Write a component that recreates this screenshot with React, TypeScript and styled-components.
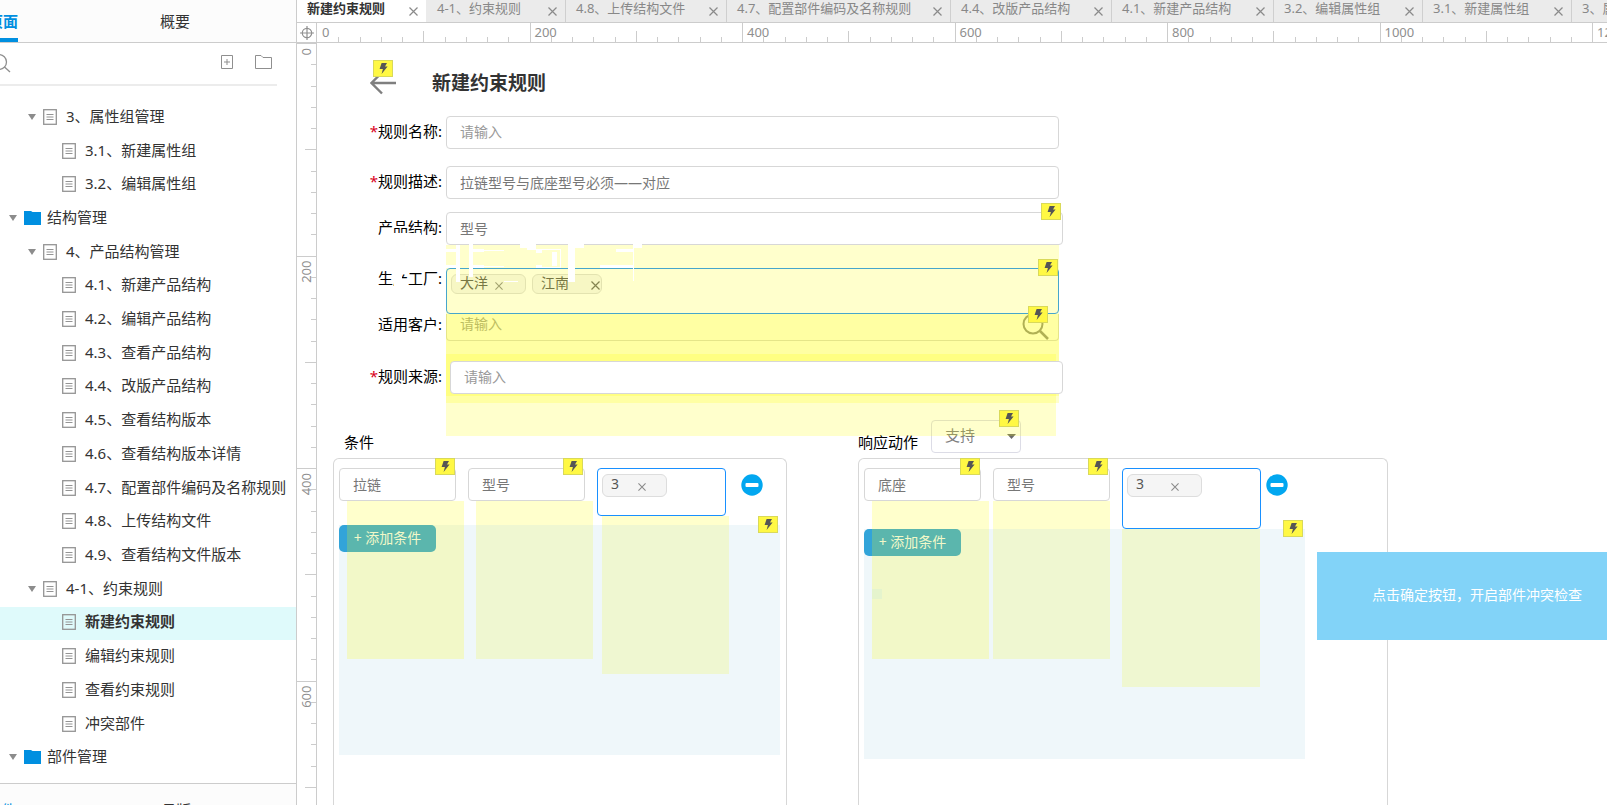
import React from "react";
import styled, { createGlobalStyle, css } from "styled-components";

const GlobalStyle = createGlobalStyle`
  *, *::before, *::after { box-sizing: border-box; }
  body {
    margin: 0;
    background: #ffffff;
    color: #333333;
    font-family: "Noto Sans", "Noto Sans CJK SC", sans-serif;
    font-size: 15px;
    line-height: 20px;
  }
  button, input, select { font: inherit; }
  button { border: 0; padding: 0; background: none; cursor: pointer; }
`;

/* ---------- shell ---------- */

const Shell = styled.div`
  display: flex;
  height: 100vh;
  overflow: hidden;
`;

const Sidebar = styled.aside`
  display: flex;
  flex-direction: column;
  flex: 0 0 297px;
  min-width: 0;
  border-right: 1px solid #cccccc;
  overflow: hidden;
`;

const PaneTabs = styled.div`
  display: flex;
  flex: none;
  gap: 142px;
  height: 43px;
  background: #fcfcfc;
  border-bottom: 1px solid #cccccc;
`;

const PaneTab = styled.button<{ $active?: boolean }>`
  display: flex;
  justify-content: flex-end;
  align-items: center;
  height: 42px;
  color: ${(p) => (p.$active ? "#008fe0" : "#333333")};
  font-weight: ${(p) => (p.$active ? 700 : 400)};
  white-space: nowrap;
  ${(p) =>
    p.$active &&
    css`
      width: 18px;
      border-bottom: 4px solid #008fe0;
      padding-top: 4px;
    `}
`;

const LibraryTabs = styled.div`
  display: flex;
  flex: none;
  align-items: flex-start;
  gap: 145px;
  height: 22px;
  padding-top: 16px;
  background: #fcfcfc;
  border-top: 1px solid #cccccc;
  overflow: hidden;
`;

const LibraryTab = styled.button<{ $active?: boolean }>`
  display: flex;
  justify-content: flex-end;
  ${(p) => p.$active && "width: 16px;"}
  color: ${(p) => (p.$active ? "#008fe0" : "#333333")};
  white-space: nowrap;
`;

const SearchBar = styled.div`
  display: flex;
  flex: none;
  align-items: center;
  height: 43px;
  margin-right: 19px;
  padding: 0 5px 2px 0;
  border-bottom: 2px solid #ececec;
`;

const SearchInput = styled.input`
  flex: 1;
  min-width: 0;
  border: 0;
  outline: 0;
  background: transparent;
`;

const BarButton = styled.button`
  display: flex;
  margin-left: 22px;
`;

const Tree = styled.ul`
  display: flex;
  flex: 1;
  flex-direction: column;
  min-height: 0;
  margin: 0;
  padding: 15px 0 8px;
  list-style: none;
`;

const TreeRow = styled.li<{ $level: number; $selected?: boolean }>`
  display: flex;
  flex: 1;
  align-items: center;
  padding: 0 0 2px ${(p) => 9 + p.$level * 19}px;
  background: ${(p) => (p.$selected ? "#dffafb" : "transparent")};
  font-weight: ${(p) => (p.$selected ? 700 : 400)};
  white-space: nowrap;
`;

const TreeToggle = styled.span`
  display: flex;
  width: 15px;
`;

const TreeIcon = styled.span`
  display: flex;
  width: 23px;
`;

const TreeName = styled.span`
  padding-bottom: 2px;
`;

const Workspace = styled.main`
  display: flex;
  flex: 1;
  flex-direction: column;
  min-width: 0;
`;

const DocTabs = styled.div`
  display: flex;
  flex: none;
  height: 23px;
  background: #ebebeb;
  border-bottom: 1px solid #cccccc;
  overflow: hidden;
`;

const DocTab = styled.div<{ $width: number; $active?: boolean }>`
  display: flex;
  flex: 0 0 ${(p) => p.$width}px;
  align-items: center;
  justify-content: space-between;
  height: 22px;
  padding: 0 8px 0 10px;
  border-right: 1px solid ${(p) => (p.$active ? "#ebebeb" : "#cfcfcf")};
  background: ${(p) => (p.$active ? "#ffffff" : "#ebebeb")};
  color: ${(p) => (p.$active ? "#333333" : "#888888")};
  font-size: 13px;
  font-weight: ${(p) => (p.$active ? 700 : 400)};
`;

const DocName = styled.span`
  height: 22px;
  line-height: 16px;
  white-space: nowrap;
`;

const DocClose = styled.button`
  display: flex;
`;

const RulerRow = styled.div`
  display: flex;
  flex: none;
  height: 20px;
  border-bottom: 1px solid #cccccc;
`;

const RulerCorner = styled.div`
  display: flex;
  flex: 0 0 20px;
  align-items: center;
  justify-content: center;
  border-right: 1px solid #cccccc;
`;

const RulerTrack = styled.div`
  flex: 1;
  min-width: 0;
  overflow: hidden;
`;

const Stage = styled.div`
  display: flex;
  flex: 1;
  min-height: 0;
`;

const SideRuler = styled.div`
  flex: 0 0 20px;
  border-right: 1px solid #cccccc;
  overflow: hidden;
`;

const Canvas = styled.section`
  position: relative;
  display: flex;
  flex: 1;
  flex-direction: column;
  min-width: 0;
  overflow: hidden;
`;

/* ---------- page on the canvas ---------- */

const TitleRow = styled.header`
  display: flex;
  flex: none;
  align-items: center;
  gap: 36px;
  height: 60px;
  padding: 20px 0 0 53px;
`;

const BackButton = styled.button`
  position: relative;
  display: flex;
`;

const Title = styled.h1`
  margin: 0;
  font-size: 19px;
  line-height: 24px;
  white-space: nowrap;
`;

const Form = styled.form`
  display: flex;
  flex: none;
  flex-direction: column;
  padding-top: 13px;
`;

const FormRow = styled.div<{ $gap?: number }>`
  position: relative;
  display: flex;
  align-items: flex-start;
  margin-top: ${(p) => p.$gap ?? 0}px;
`;

const Label = styled.label<{ $joined?: boolean }>`
  flex: 0 0 129px;
  padding: ${(p) => (p.$joined ? 0 : 5)}px 4px 0 0;
  color: #000000;
  text-align: right;
  white-space: nowrap;
`;

const Star = styled.span`
  color: #d9001b;
`;

const Field = styled.div<{ $width: number; $raised?: boolean; $shift?: boolean }>`
  position: relative;
  flex: 0 0 ${(p) => p.$width}px;
  ${(p) => p.$raised && "z-index: 2;"}
  ${(p) => p.$shift && "margin-left: 4px;"}
`;

const TextInput = styled.input<{ $joined?: boolean }>`
  display: block;
  width: 100%;
  height: ${(p) => (p.$joined ? 27 : 33)}px;
  padding: ${(p) => (p.$joined ? "0 13px 8px" : "0 13px 2px")};
  border: 1px solid #d7d7d7;
  border-radius: 4px;
  ${(p) => p.$joined && "border-top: 0; border-radius: 0 0 4px 4px;"}
  background: #ffffff;
  color: #777777;
  font-size: 14px;
  outline: 0;
  &::placeholder { color: #999999; opacity: 1; }
`;

const TagBox = styled.div<{ $height: number }>`
  display: flex;
  align-items: flex-start;
  gap: 6px;
  height: ${(p) => p.$height}px;
  padding: 5px 4px;
  border: 1px solid #1890ff;
  border-radius: 4px;
  background: #ffffff;
`;

const Tag = styled.span<{ $width: number; $compact?: boolean }>`
  display: flex;
  align-items: center;
  gap: 7px;
  width: ${(p) => p.$width}px;
  height: ${(p) => (p.$compact ? 20 : 23)}px;
  padding: 0 0 3px 8px;
  border: 1px solid #dddddd;
  border-radius: 6px;
  background: #f5f5f5;
  color: #555555;
  font-size: 14px;
  white-space: nowrap;
`;

const TagClose = styled.button<{ $inset?: number }>`
  display: flex;
  padding-top: 6px;
  margin-left: ${(p) => p.$inset ?? 0}px;
`;

const SearchButton = styled.button`
  position: absolute;
  right: 10px;
  bottom: 1px;
  display: flex;
`;

const BadgeBox = styled.span<{ $top: number; $right: number }>`
  position: absolute;
  top: ${(p) => p.$top}px;
  right: ${(p) => p.$right}px;
  z-index: 3;
  display: flex;
  align-items: center;
  justify-content: center;
  width: 20px;
  height: 17px;
  border: 1px solid #d9d95a;
  background: #fff844;
`;

const DropLayer = styled.div<{
  $left?: number;
  $offset?: number;
  $width: number;
  $height: number;
  $front?: boolean;
}>`
  position: absolute;
  top: calc(100% + ${(p) => p.$offset ?? 0}px);
  left: ${(p) => p.$left ?? 0}px;
  z-index: ${(p) => (p.$front ? 2 : 1)};
  width: ${(p) => p.$width}px;
  height: ${(p) => p.$height}px;
  background: rgba(255, 255, 0, 0.2);
  pointer-events: none;
`;

const Traces = styled.svg`
  position: absolute;
  top: 187px;
  left: 50px;
  z-index: 2;
  pointer-events: none;
`;

const Sections = styled.div`
  display: flex;
  flex: 1;
  gap: 71px;
  min-height: 0;
  padding: 26px 0 0 16px;
`;

const Section = styled.section<{ $width: number }>`
  display: flex;
  flex: 0 0 ${(p) => p.$width}px;
  flex-direction: column;
`;

const SectionHead = styled.div<{ $inset?: boolean }>`
  display: flex;
  align-items: flex-end;
  gap: 13px;
  height: 38px;
  ${(p) => p.$inset && "padding-left: 11px;"}
`;

const SectionLabel = styled.label`
  padding-bottom: 6px;
  color: #000000;
`;

const SelectWrap = styled.div`
  position: relative;
  width: 90px;
  margin-bottom: 5px;
`;

const Select = styled.select`
  display: block;
  width: 100%;
  height: 33px;
  padding: 0 13px 3px;
  appearance: none;
  border: 1px solid #dcdce6;
  border-radius: 4px;
  background: #ffffff;
  color: #7f7f7f;
  outline: 0;
`;

const Caret = styled.svg`
  position: absolute;
  top: 14px;
  right: 5px;
  pointer-events: none;
`;

const Panel = styled.div`
  flex: 1;
  padding: 9px 5px 0;
  border: 1px solid #d7d7d7;
  border-bottom: 0;
  border-radius: 6px 6px 0 0;
`;

const RuleRow = styled.div`
  display: flex;
  align-items: flex-start;
  gap: 12px;
`;

const RemoveButton = styled.button<{ $gap: number }>`
  display: flex;
  margin: 6px 0 0 ${(p) => p.$gap}px;
`;

const ActionArea = styled.div<{ $gap: number }>`
  position: relative;
  width: 441px;
  height: 230px;
  margin-top: ${(p) => p.$gap}px;
`;

const ActionShade = styled.div`
  position: absolute;
  inset: 0;
  z-index: 1;
  background: rgba(175, 215, 230, 0.2);
  pointer-events: none;
`;

const AddButton = styled.button`
  display: block;
  width: 97px;
  height: 27px;
  padding-bottom: 2px;
  border-radius: 5px;
  background: #1398d6;
  color: #ffffff;
  font-size: 14px;
`;

const Speck = styled.i<{ $top: number; $left: number; $size: number }>`
  position: absolute;
  top: ${(p) => p.$top}px;
  left: ${(p) => p.$left}px;
  z-index: 2;
  width: ${(p) => p.$size}px;
  height: ${(p) => p.$size}px;
  background: rgba(215, 240, 210, 0.5);
`;

const Callout = styled.div`
  position: absolute;
  top: 509px;
  left: 1000px;
  z-index: 4;
  display: flex;
  align-items: center;
  justify-content: center;
  width: 320px;
  height: 88px;
  padding-bottom: 2px;
  background: #82d3f8;
  color: #ffffff;
  font-size: 14px;
  white-space: nowrap;
`;

/* ---------- drawings ---------- */

const Cross = ({ size = 9, color = "#8a8a8a" }: { size?: number; color?: string }) => (
  <svg width={size} height={size} viewBox="0 0 9 9" stroke={color} strokeWidth="1.2">
    <path d="M.5.5l8 8M8.5.5l-8 8" />
  </svg>
);

const Badge = ({ top = -9, right = 1 }: { top?: number; right?: number }) => (
  <BadgeBox $top={top} $right={right}>
    <svg width="9" height="11" viewBox="0 0 9 11" fill="#555555">
      <path d="M2.6 0H8L6 3.4h2.6L2.6 11l1.3-5H.6z" />
    </svg>
  </BadgeBox>
);

const PageIcon = () => (
  <svg width="14" height="16" viewBox="0 0 14 16" fill="none" stroke="#949494">
    <rect x=".7" y=".7" width="12.6" height="14.6" strokeWidth="1.3" />
    <path d="M3.5 5.5h7M3.5 8h7M3.5 10.5h7" />
  </svg>
);

const FolderIcon = () => (
  <svg width="17" height="14" viewBox="0 0 17 14">
    <path d="M0 0h7l1.5 1H17v13H0z" fill="#008fe0" />
  </svg>
);

const Triangle = () => (
  <svg width="8" height="6" viewBox="0 0 8 6">
    <path d="M0 0h8L4 6z" fill="#8c8c8c" />
  </svg>
);

const Minus = () => (
  <svg width="22" height="22" viewBox="0 0 22 22">
    <circle cx="11" cy="11" r="10.7" fill="#02a7f0" />
    <rect x="4.5" y="9" width="13" height="4" rx="1" fill="#ffffff" />
  </svg>
);

/* 200 canvas units span 212.5 screen units, with a tick every 20 units */
const STEP = 21.25;
const tickLength = (i: number) => (i % 10 === 0 ? 20 : i % 5 === 0 ? 11 : 5);
const ticks = Array.from({ length: 140 }, (_, i) => i);

const TopRuler = () => (
  <svg width="100%" height="19" fill="#8f8f8f" fontSize="13">
    {ticks.map((i) => (
      <React.Fragment key={i}>
        {i > 0 && (
          <rect x={Math.round(i * STEP)} y={19 - tickLength(i)} width="1" height={tickLength(i)} fill="#cccccc" />
        )}
        {i % 10 === 0 && (
          <text x={i * STEP + 5} y="14">
            {i * 20}
          </text>
        )}
      </React.Fragment>
    ))}
  </svg>
);

const LeftRuler = () => (
  <svg width="19" height="100%" fill="#8f8f8f" fontSize="13">
    {ticks.slice(0, 80).map((i) => (
      <React.Fragment key={i}>
        <rect y={Math.round(i * STEP)} x={19 - tickLength(i)} width={tickLength(i)} height="1" fill="#cccccc" />
        {i % 10 === 0 && (
          <text transform={`translate(14 ${i * STEP + 5}) rotate(-90)`} textAnchor="end">
            {i * 20}
          </text>
        )}
      </React.Fragment>
    ))}
  </svg>
);

/* ---------- data ---------- */

type Node = { name: string; level: number; kind?: "folder" | "parent"; selected?: boolean };

const tree: Node[] = [
  { name: "3、属性组管理", level: 1, kind: "parent" },
  { name: "3.1、新建属性组", level: 2 },
  { name: "3.2、编辑属性组", level: 2 },
  { name: "结构管理", level: 0, kind: "folder" },
  { name: "4、产品结构管理", level: 1, kind: "parent" },
  { name: "4.1、新建产品结构", level: 2 },
  { name: "4.2、编辑产品结构", level: 2 },
  { name: "4.3、查看产品结构", level: 2 },
  { name: "4.4、改版产品结构", level: 2 },
  { name: "4.5、查看结构版本", level: 2 },
  { name: "4.6、查看结构版本详情", level: 2 },
  { name: "4.7、配置部件编码及名称规则", level: 2 },
  { name: "4.8、上传结构文件", level: 2 },
  { name: "4.9、查看结构文件版本", level: 2 },
  { name: "4-1、约束规则", level: 1, kind: "parent" },
  { name: "新建约束规则", level: 2, selected: true },
  { name: "编辑约束规则", level: 2 },
  { name: "查看约束规则", level: 2 },
  { name: "冲突部件", level: 2 },
  { name: "部件管理", level: 0, kind: "folder" },
];

const docs = [
  { name: "新建约束规则", width: 130, active: true },
  { name: "4-1、约束规则", width: 139 },
  { name: "4.8、上传结构文件", width: 161 },
  { name: "4.7、配置部件编码及名称规则", width: 224 },
  { name: "4.4、改版产品结构", width: 161 },
  { name: "4.1、新建产品结构", width: 162 },
  { name: "3.2、编辑属性组", width: 149 },
  { name: "3.1、新建属性组", width: 149 },
  { name: "3、属性组管理", width: 139 },
];

type RuleProps = {
  id: string;
  part: string;
  boxWidth: number;
  boxHeight: number;
  tagWidth: number;
  tagInset: number;
  removeGap: number;
  areaGap: number;
  drops: [number, number, number];
  dropWidth: number;
};

const RulePanel = (p: RuleProps) => (
  <Panel>
    <RuleRow>
      <Field $width={117}>
        <TextInput aria-label="部件" id={`${p.id}-part`} defaultValue={p.part} />
        <Badge top={-10} />
        <DropLayer $left={p.drops[0]} $width={117} $height={158} $front />
      </Field>
      <Field $width={117}>
        <TextInput aria-label="属性" id={`${p.id}-attr`} defaultValue="型号" />
        <Badge top={-10} right={2} />
        <DropLayer $left={p.drops[1]} $width={117} $height={158} />
      </Field>
      <Field $width={p.boxWidth}>
        <TagBox $height={p.boxHeight}>
          <Tag $width={p.tagWidth}>
            3
            <TagClose type="button" aria-label="移除" $inset={p.tagInset}>
              <Cross size={8} />
            </TagClose>
          </Tag>
        </TagBox>
        <DropLayer $left={p.drops[2]} $width={p.dropWidth} $height={158} />
      </Field>
      <RemoveButton type="button" aria-label="删除" $gap={p.removeGap}>
        <Minus />
      </RemoveButton>
    </RuleRow>
    <ActionArea $gap={p.areaGap}>
      <AddButton type="button">+ 添加条件</AddButton>
      <ActionShade />
      <Badge right={2} />
      {p.id === "action" && <Speck $top={60} $left={8} $size={10} />}
    </ActionArea>
  </Panel>
);

export default function App() {
  return (
    <>
      <GlobalStyle />
      <Shell>
        <Sidebar>
          <PaneTabs>
            <PaneTab $active>页面</PaneTab>
            <PaneTab>概要</PaneTab>
          </PaneTabs>
          <SearchBar>
            <svg width="11" height="20" viewBox="0 0 11 20" fill="none" stroke="#8f8f8f" strokeWidth="1.3">
              <circle cx="-1" cy="9" r="7.5" />
              <path d="M4.5 14l5.5 5" />
            </svg>
            <SearchInput aria-label="搜索页面" />
            <BarButton aria-label="添加页面">
              <svg width="12" height="15" viewBox="0 0 12 15" fill="none" stroke="#8f8f8f">
                <path d="M.5.5h11v13H.5zM6 4v6M3 7h6" />
              </svg>
            </BarButton>
            <BarButton aria-label="添加文件夹">
              <svg width="17" height="15" viewBox="0 0 17 15" fill="none" stroke="#8f8f8f">
                <path d="M.5.5h5.500l2 2h8.500v11H.5z" />
              </svg>
            </BarButton>
          </SearchBar>
          <Tree>
            {tree.map((n) => (
              <TreeRow key={n.name} $level={n.level} $selected={n.selected}>
                <TreeToggle>{n.kind && <Triangle />}</TreeToggle>
                <TreeIcon>{n.kind === "folder" ? <FolderIcon /> : <PageIcon />}</TreeIcon>
                <TreeName>{n.name}</TreeName>
              </TreeRow>
            ))}
          </Tree>
          <LibraryTabs>
            <LibraryTab $active>元件</LibraryTab>
            <LibraryTab>母版</LibraryTab>
          </LibraryTabs>
        </Sidebar>

        <Workspace>
          <DocTabs>
            {docs.map((d) => (
              <DocTab key={d.name} $width={d.width} $active={d.active}>
                <DocName>{d.name}</DocName>
                <DocClose aria-label={`关闭 ${d.name}`}>
                  <Cross />
                </DocClose>
              </DocTab>
            ))}
          </DocTabs>
          <RulerRow>
            <RulerCorner>
              <svg width="14" height="14" viewBox="0 0 14 14" fill="none" stroke="#8f8f8f" strokeWidth="1.2">
                <circle cx="7" cy="7" r="4.700" />
                <path d="M7 0v14M0 7h14" />
              </svg>
            </RulerCorner>
            <RulerTrack>
              <TopRuler />
            </RulerTrack>
          </RulerRow>
          <Stage>
            <SideRuler>
              <LeftRuler />
            </SideRuler>
            <Canvas>
              <TitleRow>
                <BackButton aria-label="返回">
                  <svg width="26" height="24" viewBox="0 0 26 24" fill="none" stroke="#7f7f7f" strokeWidth="2.400">
                    <path d="M1 12h25M12 1.500L1.500 12l10.500 10.500" />
                  </svg>
                  <Badge top={-11} right={3} />
                </BackButton>
                <Title>新建约束规则</Title>
              </TitleRow>

              <Form>
                <FormRow>
                  <Label htmlFor="name">
                    <Star>*</Star>规则名称:
                  </Label>
                  <Field $width={613}>
                    <TextInput id="name" placeholder="请输入" />
                  </Field>
                </FormRow>
                <FormRow $gap={17}>
                  <Label htmlFor="desc">
                    <Star>*</Star>规则描述:
                  </Label>
                  <Field $width={613}>
                    <TextInput id="desc" defaultValue="拉链型号与底座型号必须——对应" />
                  </Field>
                </FormRow>
                <FormRow $gap={13}>
                  <Label htmlFor="structure">产品结构:</Label>
                  <Field $width={617}>
                    <TextInput id="structure" defaultValue="型号" />
                    <Badge right={2} />
                    <DropLayer $width={613} $height={158} />
                  </Field>
                </FormRow>
                <FormRow $gap={23}>
                  <Label as="span" $joined>生产工厂:</Label>
                  <Field $width={613}>
                    <TagBox $height={46}>
                      <Tag $width={75} $compact>
                        大洋
                        <TagClose type="button" aria-label="移除大洋">
                          <Cross size={8} />
                        </TagClose>
                      </Tag>
                      <Tag $width={70} $compact>
                        江南
                        <TagClose type="button" aria-label="移除江南" $inset={15}>
                          <Cross size={9} color="#666666" />
                        </TagClose>
                      </Tag>
                    </TagBox>
                    <Badge />
                    <DropLayer $width={613} $height={82} />
                  </Field>
                </FormRow>
                <FormRow>
                  <Label htmlFor="client" $joined>适用客户:</Label>
                  <Field $width={613}>
                    <TextInput id="client" placeholder="请输入" $joined />
                    <SearchButton type="button" aria-label="搜索客户">
                      <svg width="27" height="27" viewBox="0 0 27 27" fill="none" stroke="#858585" strokeWidth="2">
                        <circle cx="11" cy="11" r="9.500" />
                        <path d="M18 18l8 8" strokeWidth="2.500" />
                      </svg>
                      <Badge top={-7} right={1} />
                    </SearchButton>
                    <DropLayer $offset={13} $width={610} $height={82} />
                  </Field>
                </FormRow>
                <FormRow $gap={20}>
                  <Label htmlFor="source">
                    <Star>*</Star>规则来源:
                  </Label>
                  <Field $width={613} $raised $shift>
                    <TextInput id="source" placeholder="请输入" />
                  </Field>
                </FormRow>
              </Form>

              {/* leftover repaint traces around the factory row */}
              <Traces width="280" height="64" viewBox="0 0 280 64" fill="#ffffff">
                <path d="M26 3h28v2H26zM27 36h8v24h-8zM35 36h6v8h-6zM35 51h6v9h-6z" />
                <path d="M79 19h10v3H79zM79 35h10v3H79zM89 15h4v37h-4zM102 13h4v34h-4zM106 19h11v3h-11zM106 35h11v3h-11z" />
                <path d="M117 20h20v1h-20zM117 36h20v1h-20zM137 51h14v1h-14z" />
                <path d="M153 13h16v5h-16zM160 18h9v2h-9zM169 19h6v4h-6zM169 35h6v3h-6zM175 19h19v1h-19zM175 37h19v1h-19zM193 19h1v19h-1zM185 22h5v14h-5z" />
                <path d="M201 13h7v39h-7zM208 13h9v5h-9zM249 19h17v3h-17zM233 35h33v3h-33zM266 13h1v38h-1zM267 13h8v5h-8z" />
              </Traces>

              <Sections>
                <Section $width={454}>
                  <SectionHead $inset>
                    <SectionLabel as="span">条件</SectionLabel>
                  </SectionHead>
                  <RulePanel
                    id="condition"
                    part="拉链"
                    boxWidth={129}
                    boxHeight={48}
                    tagWidth={65}
                    tagInset={12}
                    removeGap={3}
                    areaGap={9}
                    drops={[8, 8, 5]}
                    dropWidth={127}
                  />
                </Section>
                <Section $width={530}>
                  <SectionHead>
                    <SectionLabel htmlFor="action-kind">响应动作</SectionLabel>
                    <SelectWrap>
                      <Select id="action-kind" defaultValue="支持">
                        <option>支持</option>
                      </Select>
                      <Caret width="9" height="5" viewBox="0 0 9 5">
                        <path d="M0 0h9L4.500 5z" fill="#6b6b6b" />
                      </Caret>
                      <Badge top={-10} right={2} />
                    </SelectWrap>
                  </SectionHead>
                  <RulePanel
                    id="action"
                    part="底座"
                    boxWidth={139}
                    boxHeight={61}
                    tagWidth={75}
                    tagInset={20}
                    removeGap={-7}
                    areaGap={0}
                    drops={[8, 0, 0]}
                    dropWidth={138}
                  />
                </Section>
              </Sections>

              <Callout>点击确定按钮，开启部件冲突检查</Callout>
            </Canvas>
          </Stage>
        </Workspace>
      </Shell>
    </>
  );
}
